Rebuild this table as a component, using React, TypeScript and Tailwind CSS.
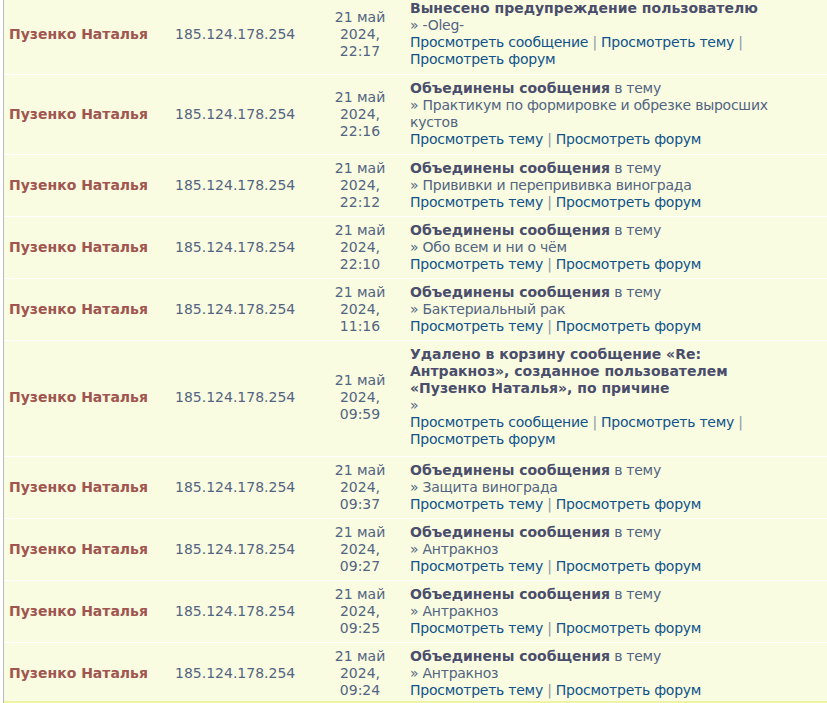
import React from 'react'

type Entry = {
  time: string
  title: string
  tail?: string
  topic?: string
  links: string[]
  pb: string
}

const ENTRIES: Entry[] = [
  { time: '22:17', title: 'Вынесено предупреждение пользователю', topic: '-Oleg-', links: ['Просмотреть сообщение', 'Просмотреть тему', 'Просмотреть форум'], pb: 'pb-[6px]' },
  { time: '22:16', title: 'Объединены сообщения', tail: ' в тему', topic: 'Практикум по формировке и обрезке выросших кустов', links: ['Просмотреть тему', 'Просмотреть форум'], pb: 'pb-[6px]' },
  { time: '22:12', title: 'Объединены сообщения', tail: ' в тему', topic: 'Прививки и перепрививка винограда', links: ['Просмотреть тему', 'Просмотреть форум'], pb: 'pb-[5px]' },
  { time: '22:10', title: 'Объединены сообщения', tail: ' в тему', topic: 'Обо всем и ни о чём', links: ['Просмотреть тему', 'Просмотреть форум'], pb: 'pb-[5px]' },
  { time: '11:16', title: 'Объединены сообщения', tail: ' в тему', topic: 'Бактериальный рак', links: ['Просмотреть тему', 'Просмотреть форум'], pb: 'pb-[5px]' },
  {
    time: '09:59',
    title: 'Удалено в корзину сообщение «Re: Антракноз», созданное пользователем «Пузенко Наталья», по причине',
    topic: '',
    links: ['Просмотреть сообщение', 'Просмотреть тему', 'Просмотреть форум'],
    pb: 'pb-[8px]',
  },
  { time: '09:37', title: 'Объединены сообщения', tail: ' в тему', topic: 'Защита винограда', links: ['Просмотреть тему', 'Просмотреть форум'], pb: 'pb-[5px]' },
  { time: '09:27', title: 'Объединены сообщения', tail: ' в тему', topic: 'Антракноз', links: ['Просмотреть тему', 'Просмотреть форум'], pb: 'pb-[5px]' },
  { time: '09:25', title: 'Объединены сообщения', tail: ' в тему', topic: 'Антракноз', links: ['Просмотреть тему', 'Просмотреть форум'], pb: 'pb-[5px]' },
  { time: '09:24', title: 'Объединены сообщения', tail: ' в тему', topic: 'Антракноз', links: ['Просмотреть тему', 'Просмотреть форум'], pb: 'pb-[2px]' },
]

function LogRow({ e, last }: { e: Entry; last: boolean }) {
  return (
    <div className={`flex items-center pt-[5px] ${e.pb} ${last ? '' : 'border-b border-white'}`}>
      {/* user */}
      <div className="w-[166px] shrink-0 pl-[5px] font-bold text-[#a0554f]">Пузенко Наталья</div>
      {/* ip */}
      <div className="w-[149px] shrink-0 pl-[5px] text-[#536482]">185.124.178.254</div>
      {/* date */}
      <div className="w-[82px] shrink-0 text-center text-[#536482]">
        <div>21 май</div>
        <div>2024,</div>
        <div>{e.time}</div>
      </div>
      {/* action */}
      <div className="flex-1 pl-[9px] pr-[32px] text-[#536482]">
        <div>
          <strong className="text-[#4a4d6b]">{e.title}</strong>
          <span className="tracking-[-0.25px]">{e.tail}</span>
        </div>
        <div className="tracking-[-0.25px]">» {e.topic}</div>
        <div className="tracking-[-0.25px]">
          {e.links.map((l, i) => (
            <React.Fragment key={l}>
              <a href="#" className="text-[#105289]">{l}</a>
              {i < e.links.length - 1 && <span className="text-[#8a94a8]"> | </span>}
            </React.Fragment>
          ))}
        </div>
      </div>
    </div>
  )
}

export default function App() {
  return (
    <div className="h-[703px] overflow-hidden bg-white">
      <div
        className="ml-[3px] -mt-[5px] border-l border-[#b9bac8] bg-[#f9fce1] text-[14px] leading-[17px]"
        style={{ fontFamily: '"DejaVu Sans", Verdana, sans-serif' }}
      >
        {ENTRIES.map((e, i) => (
          <LogRow key={i} e={e} last={i === ENTRIES.length - 1} />
        ))}
        <div className="h-[6px] bg-[#eef3a6]" />
      </div>
    </div>
  )
}
